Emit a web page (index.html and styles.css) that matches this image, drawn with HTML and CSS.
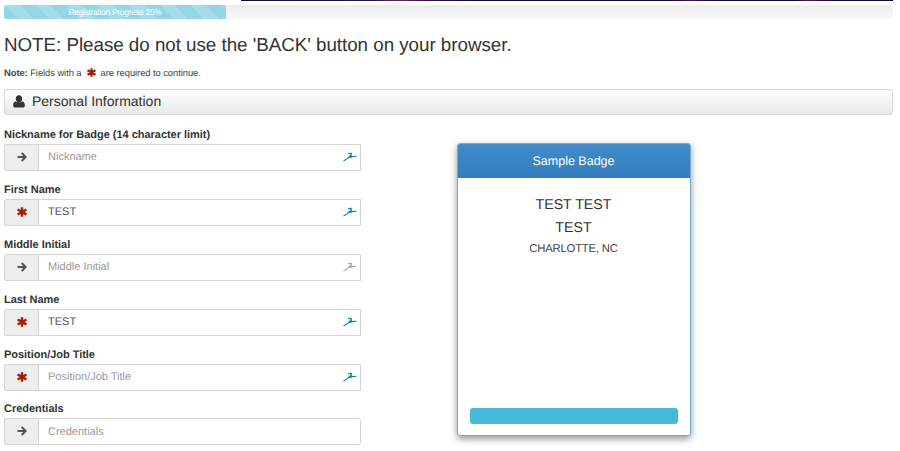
FILE: index.html
```html
<!DOCTYPE html>
<html lang="en">
<head>
<meta charset="utf-8">
<title>Registration</title>
<link rel="stylesheet" href="styles.css">
</head>
<body>
<svg width="0" height="0" class="defs">
  <symbol id="arrow" viewBox="0 0 10 10"><path d="M.5 5H8.3M4.7 1L8.7 5L4.7 9" fill="none" stroke="currentColor" stroke-width="2"/></symbol>
  <symbol id="star" viewBox="0 0 10 10"><path d="M5 1.4V8.6M1.6 3.1L8.4 6.9M8.4 3.1L1.6 6.9" fill="none" stroke="currentColor" stroke-width="2.4" stroke-linecap="square"/></symbol>
  <symbol id="user" viewBox="0 0 12 13"><path d="M6 .3C8 .3 9.2 1.8 9.2 3.8S7.8 7.7 6 7.7 2.8 5.8 2.8 3.8 4 .3 6 .3zM2.9 6.6C3.7 7.4 4.8 7.7 6 7.7S8.3 7.4 9.1 6.6C11 6.8 11.8 8.2 11.8 10.5 11.8 11.9 11 12.5 9.8 12.5H2.2C1 12.5.2 11.9.2 10.5.2 8.2 1 6.8 2.9 6.6z" fill="currentColor"/></symbol>
  <symbol id="runner" viewBox="0 0 14 10"><path d="M.5 9L3 7.6 5.8 5.4M5 1.5L8 1.7 7.7 4M5.5 5.2L8 4.5 13.4 4.4" fill="none" stroke="currentColor" stroke-width="1.2"/><path d="M7 .8H8.8V2.6H7zM4.8 6.2L6.8 3.3 8.9 3.3 9.8 5.4z" fill="currentColor"/></symbol>
</svg>
<div class="banner"></div>
<main>
  <div class="progress"><div class="bar">Registration Progress 25%</div></div>
  <h1>NOTE: Please do not use the 'BACK' button on your browser.</h1>
  <p class="note"><b>Note:</b> Fields with a <svg class="req"><use href="#star"/></svg> are required to continue.</p>
  <h2><svg><use href="#user"/></svg>Personal Information</h2>
  <div class="columns">
    <form>
      <div class="field"><label for="nick">Nickname for Badge (14 character limit)</label><div class="group"><span class="addon"><svg><use href="#arrow"/></svg></span><input id="nick" placeholder="Nickname"><svg class="runner"><use href="#runner"/></svg></div></div>
      <div class="field"><label for="first">First Name</label><div class="group"><span class="addon required"><svg><use href="#star"/></svg></span><input id="first" value="TEST"><svg class="runner"><use href="#runner"/></svg></div></div>
      <div class="field"><label for="middle">Middle Initial</label><div class="group"><span class="addon"><svg><use href="#arrow"/></svg></span><input id="middle" placeholder="Middle Initial"><svg class="runner muted"><use href="#runner"/></svg></div></div>
      <div class="field"><label for="last">Last Name</label><div class="group"><span class="addon required"><svg><use href="#star"/></svg></span><input id="last" value="TEST"><svg class="runner"><use href="#runner"/></svg></div></div>
      <div class="field"><label for="title">Position/Job Title</label><div class="group"><span class="addon required"><svg><use href="#star"/></svg></span><input id="title" placeholder="Position/Job Title"><svg class="runner"><use href="#runner"/></svg></div></div>
      <div class="field"><label for="cred">Credentials</label><div class="group"><span class="addon"><svg><use href="#arrow"/></svg></span><input id="cred" class="rounded" placeholder="Credentials"></div></div>
    </form>
    <aside class="badge">
      <header>Sample Badge</header>
      <div class="person"><div>TEST TEST</div><div>TEST</div><div class="city">CHARLOTTE, NC</div></div>
      <div class="strip"></div>
    </aside>
  </div>
</main>
</body>
</html>
```
FILE: styles.css
```css
* { box-sizing: border-box; }
body { margin: 0; height: 451px; overflow: hidden; background: #fff; color: #333; font-family: "Liberation Sans", Arial, sans-serif; text-rendering: geometricPrecision; }
.defs { position: absolute; }
.banner { height: 1.4px; margin: 0 7px 0 241px; background: linear-gradient(90deg, #16093c, #1b1544 20%, #6b2845 24%, #32123c 28%, #12053d 35%, #10043a 66%, #3a1449 69%, #12053d 73%, #12053d 85%, #501848 87%, #12053d 90%); }
main { padding: 3.6px 7px 0 4px; }
.progress { height: 14px; border-radius: 3px; overflow: hidden; background: linear-gradient(#ededed, #f7f7f7); }
.bar { width: 222px; height: 14px; font-size: 8.6px; letter-spacing: -.36px; line-height: 14px; text-align: center; color: #fff; background: linear-gradient(45deg, #a5dcec 25%, #94d5e8 25%, #94d5e8 50%, #a5dcec 50%, #a5dcec 75%, #94d5e8 75%) 0 0 / 31px 31px; }
h1 { margin: 15px 0 0; font-size: 18.8px; letter-spacing: -.03px; line-height: 22px; font-weight: 400; white-space: nowrap; }
.note { display: flex; align-items: center; margin: 10.5px 0 0; height: 12px; font-size: 9.4px; letter-spacing: -.06px; white-space: pre; color: #444; }
.req { width: 9px; height: 9px; margin: 0 2px 0 3px; color: #a52000; }
h2 { display: flex; align-items: center; height: 26px; margin: 10.5px 0 0; padding: 0 8px 1px; border: 1px solid #d9d9d9; border-radius: 3px; background: linear-gradient(#fff, #e8e8e8); font-size: 14px; font-weight: 400; }
h2 svg { width: 12px; height: 13px; margin-right: 7px; }
.columns { display: flex; align-items: flex-start; gap: 95.5px; }
form { width: 357px; padding-top: 13px; }
.field { height: 54.9px; }
label { display: block; height: 16px; font-size: 11px; letter-spacing: -.03px; line-height: 14px; font-weight: 700; }
.group { display: flex; position: relative; height: 27px; }
.addon { display: flex; align-items: center; justify-content: center; width: 34px; background: #eee; border: 1px solid #d4d4d4; border-right: 0; border-radius: 3px 0 0 3px; color: #555; }
.addon svg { width: 10px; height: 10px; margin-bottom: 1px; }
.required { color: #a52000; }
input { flex: 1; min-width: 0; height: 27px; padding: 0 9px; border: 1px solid #d4d4d4; border-radius: 0; background: #fff; font: 11px "Liberation Sans", Arial, sans-serif; text-rendering: geometricPrecision; color: #555; }
input::placeholder { color: #999; }
.rounded { border-radius: 0 3px 3px 0; }
.runner { position: absolute; right: 4px; top: 8px; width: 14px; height: 10px; color: #16899d; }
.muted { color: #aaa; }
.badge { width: 234px; height: 293px; margin-top: 28px; border: 1px solid #79aad6; border-radius: 3px; background: #fff; box-shadow: 0 3px 7px rgba(0,0,0,.42); display: flex; flex-direction: column; text-align: center; }
.badge header { height: 34px; line-height: 34px; border-radius: 2px 2px 0 0; background: linear-gradient(#428bca, #357ebd); color: #fff; font-size: 12.5px; }
.person { flex: 1; padding-top: 16px; font-size: 14.2px; line-height: 23px; }
.city { font-size: 11.3px; letter-spacing: -.2px; line-height: 19px; color: #444; }
.strip { height: 16px; margin: 0 12px 11px; border-radius: 3px; background: #46b8da; }
```
